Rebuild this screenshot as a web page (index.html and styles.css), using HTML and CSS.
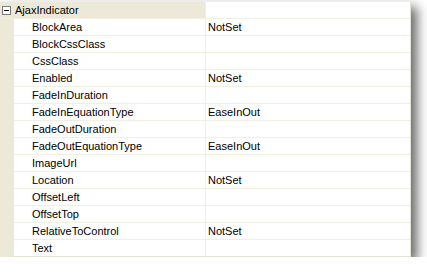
FILE: index.html
```html
<!DOCTYPE html>
<html>
<head>
<meta charset="utf-8">
<link rel="stylesheet" href="styles.css">
</head>
<body>
<div class="grid">
  <div class="row cat">
    <div class="catname"><span class="exp"><span class="minus"></span></span><span class="cattext">AjaxIndicator</span></div>
    <div class="val"></div>
  </div>
  <div class="row"><div class="gut"></div><div class="name">BlockArea</div><div class="val">NotSet</div></div>
  <div class="row"><div class="gut"></div><div class="name">BlockCssClass</div><div class="val"></div></div>
  <div class="row"><div class="gut"></div><div class="name">CssClass</div><div class="val"></div></div>
  <div class="row"><div class="gut"></div><div class="name">Enabled</div><div class="val">NotSet</div></div>
  <div class="row"><div class="gut"></div><div class="name">FadeInDuration</div><div class="val"></div></div>
  <div class="row"><div class="gut"></div><div class="name">FadeInEquationType</div><div class="val">EaseInOut</div></div>
  <div class="row"><div class="gut"></div><div class="name">FadeOutDuration</div><div class="val"></div></div>
  <div class="row"><div class="gut"></div><div class="name">FadeOutEquationType</div><div class="val">EaseInOut</div></div>
  <div class="row"><div class="gut"></div><div class="name">ImageUrl</div><div class="val"></div></div>
  <div class="row"><div class="gut"></div><div class="name">Location</div><div class="val">NotSet</div></div>
  <div class="row"><div class="gut"></div><div class="name">OffsetLeft</div><div class="val"></div></div>
  <div class="row"><div class="gut"></div><div class="name">OffsetTop</div><div class="val"></div></div>
  <div class="row"><div class="gut"></div><div class="name">RelativeToControl</div><div class="val">NotSet</div></div>
  <div class="row last"><div class="gut"></div><div class="name">Text</div><div class="val"></div></div>
</div>
</body>
</html>
```
FILE: styles.css
```css
html, body {
  margin: 0;
  padding: 0;
  background: #ffffff;
}
body {
  padding-top: 1px;
  font-family: "Liberation Sans", Arial, sans-serif;
  font-size: 11px;
  color: #000;
}
.grid {
  width: 410px;
  border-top: 1px solid #f1efe2;
  border-right: 1px solid #e4e2d4;
  background: #fff;
  box-shadow: 6px 6px 11px rgba(0, 0, 0, 0.6);
}
.row {
  display: flex;
  height: 16px;
  line-height: 16px;
  border-bottom: 1px solid #f1efe2;
}
.row.last {
  border-bottom-color: #e4e2d4;
}
.gut {
  width: 14px;
  background: #ece9d8;
  flex: none;
}
.row:not(.cat) .gut {
  margin-bottom: -1px;
  height: 17px;
}
.name {
  width: 173px;
  padding-left: 18px;
  border-right: 1px solid #f1efe2;
  flex: none;
  white-space: nowrap;
}
.val {
  flex: 1;
  padding-left: 2px;
  white-space: nowrap;
}
.catname {
  width: 205px;
  background: #ece9d8;
  border-right: 1px solid #f1efe2;
  flex: none;
  display: flex;
  align-items: center;
}
.exp {
  width: 7px;
  height: 7px;
  border: 1px solid #7a7a7a;
  background: #fff;
  margin-left: 2px;
  margin-right: 4px;
  display: flex;
  align-items: center;
  justify-content: center;
  flex: none;
}
.minus {
  width: 5px;
  height: 1px;
  background: #000;
}
.cattext {
  line-height: 16px;
}
```
